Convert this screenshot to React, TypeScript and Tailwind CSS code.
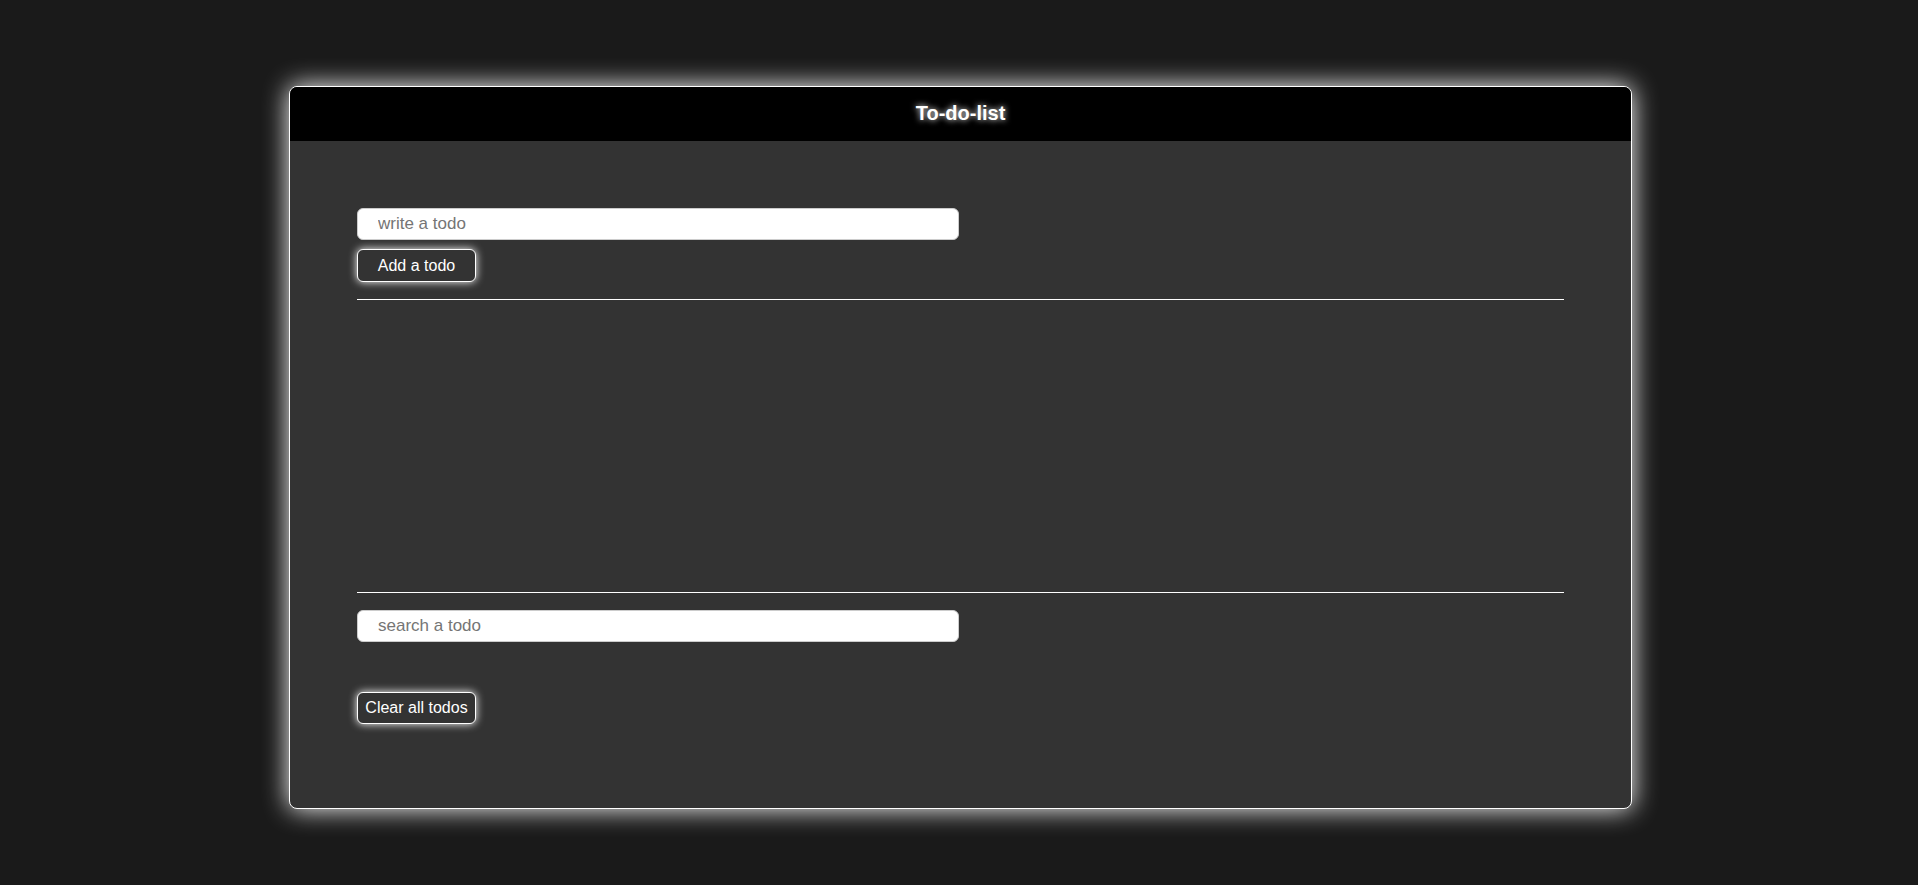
export default function App() {
  return (
    <div className="min-h-[885px] bg-[#1a1a1a] pl-[3px] pt-[86px] font-['Liberation_Sans',Arial,sans-serif]">
      <div className="mx-auto w-[1343px] rounded-lg border border-white bg-[#333333] shadow-[0_0_26px_#ffffff]">
        {/* Header */}
        <div className="flex h-[54px] items-center justify-center rounded-t-[7px] bg-black pb-[2px]">
          <h1 className="text-[20px] font-bold text-white [text-shadow:0_0_6px_#ffffff]">To-do-list</h1>
        </div>

        <div className="px-[67px] pb-[84px] pt-[67px]">
          {/* Add form */}
          <input
            type="text"
            placeholder="write a todo"
            className="block h-8 w-[602px] rounded-md border border-[#ccc] bg-white pl-5 text-[17px] text-black outline-none placeholder:text-[#757575]"
          />
          <button className="mt-[9px] block h-[33px] w-[119px] rounded-md border border-white bg-[#333333] text-center text-[16px] text-white shadow-[0_0_8px_#ffffff]">
            Add a todo
          </button>

          <div className="mt-[17px] border-t border-white" />

          {/* Todo list */}
          <ul className="h-[292px]" />

          <div className="border-t border-white" />

          {/* Search */}
          <input
            type="text"
            placeholder="search a todo"
            className="mt-[17px] block h-8 w-[602px] rounded-md border border-[#ccc] bg-white pl-5 text-[17px] text-black outline-none placeholder:text-[#757575]"
          />

          <button className="mt-[50px] block h-[32px] w-[119px] rounded-md border border-white bg-[#333333] text-center text-[16px] text-white shadow-[0_0_8px_#ffffff]">
            Clear all todos
          </button>
        </div>
      </div>
    </div>
  );
}
